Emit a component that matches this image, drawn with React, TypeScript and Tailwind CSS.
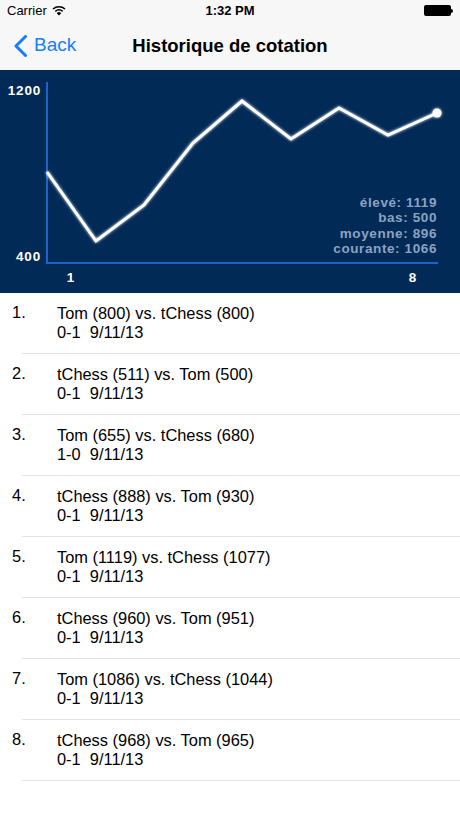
const games = [
  { title: 'Tom (800) vs. tChess (800)', result: '0-1', date: '9/11/13' },
  { title: 'tChess (511) vs. Tom (500)', result: '0-1', date: '9/11/13' },
  { title: 'Tom (655) vs. tChess (680)', result: '1-0', date: '9/11/13' },
  { title: 'tChess (888) vs. Tom (930)', result: '0-1', date: '9/11/13' },
  { title: 'Tom (1119) vs. tChess (1077)', result: '0-1', date: '9/11/13' },
  { title: 'tChess (960) vs. Tom (951)', result: '0-1', date: '9/11/13' },
  { title: 'Tom (1086) vs. tChess (1044)', result: '0-1', date: '9/11/13' },
  { title: 'tChess (968) vs. Tom (965)', result: '0-1', date: '9/11/13' },
];

// chart points in pixel coords of the 460x223 canvas
const points: [number, number][] = [
  [47, 102],
  [96, 171],
  [144, 135],
  [193, 73],
  [242, 31],
  [291, 69],
  [339, 38],
  [388, 65],
  [437, 43],
];

const stats = ['élevé: 1119', 'bas: 500', 'moyenne: 896', 'courante: 1066'];

function StatusBar() {
  return (
    <div className="h-[21px] flex items-center justify-between px-[7px] text-[13px] text-black">
      <div className="flex items-center gap-[5px]">
        <span>Carrier</span>
        <svg width="14" height="11" viewBox="0 0 14 11">
          <path d="M1 4 A9 9 0 0 1 13 4" fill="none" stroke="black" strokeWidth="1.6" />
          <path d="M3.3 6.3 A5.8 5.8 0 0 1 10.7 6.3" fill="none" stroke="black" strokeWidth="1.6" />
          <path d="M7 10.5 L4.8 8.2 A3 3 0 0 1 9.2 8.2 Z" fill="black" />
        </svg>
      </div>
      <span className="absolute left-1/2 -translate-x-1/2 font-semibold">1:32 PM</span>
      <div className="flex items-center">
        <div className="w-[27px] h-[11px] rounded-[2px] bg-black" />
        <div className="w-[2px] h-[4px] bg-black rounded-r-sm" />
      </div>
    </div>
  );
}

function NavBar() {
  return (
    <div className="h-[49px] flex items-center relative">
      <div className="flex items-center gap-[7px] text-[#157efb] pl-[14px]">
        <svg width="13" height="22" viewBox="0 0 13 22">
          <path d="M11.5 1.5 L2 11 L11.5 20.5" fill="none" stroke="#157efb" strokeWidth="3" strokeLinecap="round" strokeLinejoin="round" />
        </svg>
        <span className="text-[19px]">Back</span>
      </div>
      <span className="absolute left-1/2 -translate-x-1/2 text-[18.5px] font-bold text-black whitespace-nowrap">
        Historique de cotation
      </span>
    </div>
  );
}

function Chart() {
  const d = points.map((p, i) => `${i === 0 ? 'M' : 'L'}${p[0]} ${p[1]}`).join(' ');
  const last = points[points.length - 1];
  return (
    <div className="h-[223px] bg-[#012a57]">
      <svg width="460" height="223" viewBox="0 0 460 223" className="block">
        <defs>
          <filter id="glow" x="-10%" y="-20%" width="120%" height="140%">
            <feGaussianBlur stdDeviation="1.8" result="b" />
            <feMerge>
              <feMergeNode in="b" />
              <feMergeNode in="SourceGraphic" />
            </feMerge>
          </filter>
        </defs>
        <line x1="47" y1="12" x2="47" y2="193" stroke="#1a63c9" strokeWidth="2" />
        <line x1="46" y1="193" x2="438" y2="193" stroke="#1a63c9" strokeWidth="2" />
        <g fontFamily="'Liberation Sans', Arial, sans-serif" fontWeight="bold" fontSize="13.5" letterSpacing="0.8" fill="#ffffff">
          <text x="41" y="25" textAnchor="end">1200</text>
          <text x="41" y="191" textAnchor="end">400</text>
          <text x="71" y="212" textAnchor="middle">1</text>
          <text x="413" y="212" textAnchor="middle">8</text>
        </g>
        <g fontFamily="'Liberation Sans', Arial, sans-serif" fontWeight="bold" fontSize="13.5" letterSpacing="0.6" fill="#8ea2c0">
          {stats.map((s, i) => (
            <text key={s} x="437" y={137 + i * 15.3} textAnchor="end">{s}</text>
          ))}
        </g>
        <g filter="url(#glow)">
          <path d={d} fill="none" stroke="#ffffff" strokeWidth="3" strokeLinejoin="miter" />
          <circle cx={last[0]} cy={last[1]} r="4.5" fill="#ffffff" />
        </g>
      </svg>
    </div>
  );
}

export default function App() {
  return (
    <div className="w-[460px] min-h-[818px] bg-white relative font-['Liberation_Sans',Arial,sans-serif]">
      <div className="bg-[#f7f7f7]">
        <StatusBar />
        <NavBar />
      </div>
      <Chart />
      <div>
        {games.map((g, i) => (
          <div key={i} className="h-[61px] flex relative">
            <span className="w-[57px] shrink-0 pl-[12px] pt-[10px] text-[16.4px] text-black leading-[18px]">{i + 1}.</span>
            <div className="pt-[11px] text-[16.4px] text-black leading-[19px]">
              <div>{g.title}</div>
              <div>
                {g.result}&nbsp;&nbsp;{g.date}
              </div>
            </div>
            <div className="absolute left-[22px] right-0 bottom-0 h-px bg-[#e3e3e6]" />
          </div>
        ))}
      </div>
    </div>
  );
}
